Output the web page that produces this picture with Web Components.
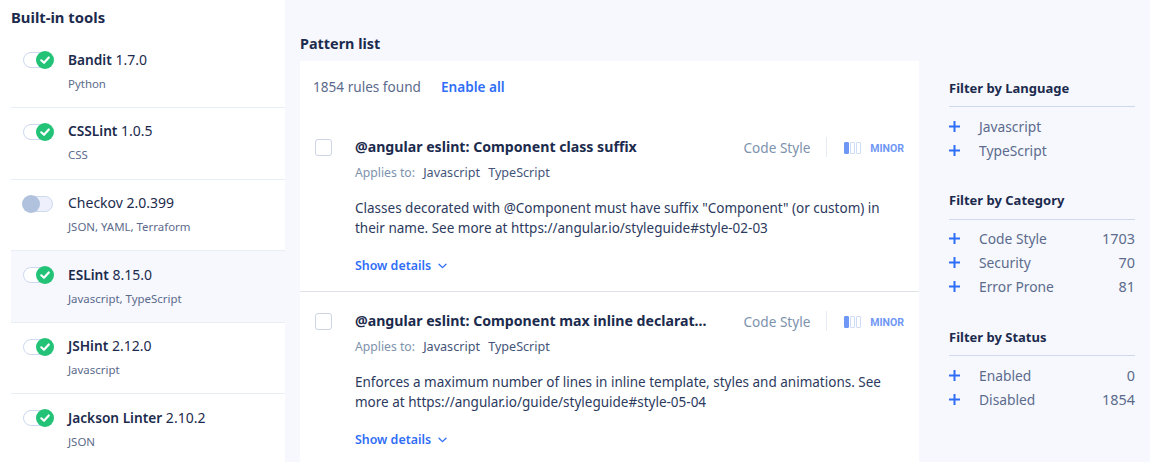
<!DOCTYPE html>
<html>
<head>
<meta charset="utf-8">
<style>
html, body { margin: 0; height: 100%; overflow: hidden; background: #fff; }
body { font-family: "Noto Sans", sans-serif; color: #1c2b4d; }
</style>
</head>
<body>
<app-shell>
    <tools-panel slot="tools">
        <tool-row name="Bandit" version="1.7.0" langs="Python" on></tool-row>
        <tool-row name="CSSLint" version="1.0.5" langs="CSS" on></tool-row>
        <tool-row name="Checkov" version="2.0.399" langs="JSON, YAML, Terraform"></tool-row>
        <tool-row name="ESLint" version="8.15.0" langs="Javascript, TypeScript" on selected></tool-row>
        <tool-row name="JSHint" version="2.12.0" langs="Javascript" on></tool-row>
        <tool-row name="Jackson Linter" version="2.10.2" langs="JSON" on></tool-row>
    </tools-panel>
    <pattern-list slot="patterns">
        <pattern-card title="@angular eslint: Component class suffix" category="Code Style">Classes decorated with @Component must have suffix "Component" (or custom) in their name. See more at https://angular.io/styleguide#style-02-03</pattern-card>
        <pattern-card title="@angular eslint: Component max inline declarat..." category="Code Style">Enforces a maximum number of lines in inline template, styles and animations. See more at https://angular.io/guide/styleguide#style-05-04</pattern-card>
    </pattern-list>
    <div slot="filters">
        <filter-group title="Filter by Language">
            <filter-item label="Javascript"></filter-item>
            <filter-item label="TypeScript"></filter-item>
        </filter-group>
        <filter-group title="Filter by Category">
            <filter-item label="Code Style" count="1703"></filter-item>
            <filter-item label="Security" count="70"></filter-item>
            <filter-item label="Error Prone" count="81"></filter-item>
        </filter-group>
        <filter-group title="Filter by Status">
            <filter-item label="Enabled" count="0"></filter-item>
            <filter-item label="Disabled" count="1854"></filter-item>
        </filter-group>
    </div>
</app-shell>

<script>
customElements.define("app-shell", class AppShell extends HTMLElement{
    constructor(){
        super()
        this.attachShadow({mode: "open"}).innerHTML = `
            <style>
            :host { display: flex; width: 1150px; height: 462px; background: #f6f8fe; overflow: hidden; }
            .tools { flex: 0 0 285px; background: #fff; }
            .patterns { flex: 0 0 619px; margin-left: 15px; }
            .filters { flex: 0 0 186px; margin-left: 30px; padding-top: 79px; }
            </style>
            <div class="tools"><slot name="tools"></slot></div>
            <div class="patterns"><slot name="patterns"></slot></div>
            <div class="filters"><slot name="filters"></slot></div>
        `
    }
})

customElements.define("tools-panel", class ToolsPanel extends HTMLElement{
    constructor(){
        super()
        this.attachShadow({mode: "open"}).innerHTML = `
            <style>
            :host { display: block; padding-left: 11px; }
            h2 { margin: 0; height: 36.4px; font-size: 14.8px; line-height: 35px; font-weight: 700; color: #1c2b4d; }
            </style>
            <h2>Built-in tools</h2>
            <slot></slot>
        `
    }
})

customElements.define("tool-row", class ToolRow extends HTMLElement{
    constructor(){
        super()
        const on = this.hasAttribute("on")
        this.attachShadow({mode: "open"}).innerHTML = `
            <style>
            :host { display: flex; box-sizing: border-box; height: 71.6px; padding: 13.5px 0 0 11px; border-bottom: 1px solid #e8eef6; }
            :host([selected]) { background: #f6f8fe; }
            .toggle { position: relative; flex: 0 0 30px; height: 16px; margin: 2.5px 15px 0 1px; box-sizing: border-box; border: 1px solid #cdd9ef; border-radius: 8px; background: ${on ? "#fff" : "#eef1fb"}; }
            .knob { position: absolute; top: -2px; width: 18px; height: 18px; border-radius: 50%; }
            .on { right: -2px; background: #22c277; }
            .off { left: -2px; background: #b0c2dd; }
            svg { display: block; width: 18px; height: 18px; }
            .name { font-size: 14px; line-height: 20px; color: #1c2b4d; white-space: nowrap; }
            b { font-weight: 600; font-size: 13.7px; }
            .langs { margin-top: 6px; font-size: 11.45px; line-height: 15px; color: #5c6b8c; white-space: nowrap; }
            </style>
            <div class="toggle">
                ${on ? `<div class="knob on"><svg viewBox="0 0 18 18" fill="none" stroke="#fff" stroke-width="2.2" stroke-linecap="round" stroke-linejoin="round"><polyline points="5.3 9.3 8 11.8 12.8 6.5"></polyline></svg></div>` : `<div class="knob off"></div>`}
            </div>
            <div>
                <div class="name">${on ? `<b>${this.getAttribute("name")}</b>` : this.getAttribute("name")} ${this.getAttribute("version")}</div>
                <div class="langs">${this.getAttribute("langs")}</div>
            </div>
        `
    }
})

customElements.define("pattern-list", class PatternList extends HTMLElement{
    constructor(){
        super()
        this.attachShadow({mode: "open"}).innerHTML = `
            <style>
            :host { display: block; }
            h2 { margin: 0; height: 61px; box-sizing: border-box; padding-top: 34px; font-size: 14.4px; line-height: 20px; font-weight: 700; color: #1c2b4d; }
            .card { background: #fff; height: 401px; }
            .top { display: flex; align-items: center; gap: 20px; height: 57px; padding: 0 0 6px 13px; box-sizing: border-box; font-size: 13.6px; color: #5c6b8c; }
            a { color: #2f6df6; font-weight: 600; text-decoration: none; }
            </style>
            <h2>Pattern list</h2>
            <div class="card">
                <div class="top"><span>1854 rules found</span><a href="#">Enable all</a></div>
                <slot></slot>
            </div>
        `
    }
})

customElements.define("pattern-card", class PatternCard extends HTMLElement{
    constructor(){
        super()
        this.attachShadow({mode: "open"}).innerHTML = `
            <style>
            :host { display: flex; box-sizing: border-box; height: 174px; padding: 20px 15px 0 15px; border-bottom: 1px solid #dfe3e8; }
            .check { flex: 0 0 17px; height: 17px; margin: 1px 23px 0 0; box-sizing: border-box; border: 1px solid #ccd5e3; border-radius: 3px; background: #fff; }
            .body { flex: 1; min-width: 0; }
            .head { display: flex; align-items: center; height: 18px; }
            .title { flex: 1; font-size: 14.15px; line-height: 18px; font-weight: 700; color: #1c2b4d; white-space: nowrap; }
            .category { font-size: 13.6px; color: #7d92ad; }
            .sep { width: 1px; height: 20px; margin: 0 17px 0 16px; background: #e6ecf4; }
            .level { display: flex; gap: 1px; margin: 2px 10px 0 0; }
            .level i { display: block; width: 5px; height: 12px; box-sizing: border-box; border: 1px solid #cfdcf7; border-radius: 1px; }
            .level i:first-child { background: #6f97f5; border-color: #6f97f5; }
            .minor { margin: 2px 0 0 -1px; font-family: Roboto, sans-serif; font-size: 10.5px; font-weight: 700; color: #6f97f5; }
            .applies { margin-top: 8px; font-size: 12.2px; line-height: 17px; color: #7d92ad; }
            .applies span { font-size: 12.6px; color: #45557a; margin-left: 5px; }
            .desc { margin-top: 17px; font-size: 13.5px; line-height: 20px; color: #2c3a5e; }
            .more { display: flex; align-items: center; gap: 7px; margin-top: 19px; font-size: 12.4px; line-height: 17px; font-weight: 600; color: #2f6df6; }
            svg { width: 9px; height: 6px; }
            </style>
            <div class="check"></div>
            <div class="body">
                <div class="head">
                    <div class="title">${this.getAttribute("title")}</div>
                    <div class="category">${this.getAttribute("category")}</div>
                    <div class="sep"></div>
                    <div class="level"><i></i><i></i><i></i></div>
                    <div class="minor">MINOR</div>
                </div>
                <div class="applies">Applies to: <span>Javascript</span> <span>TypeScript</span></div>
                <div class="desc"><slot></slot></div>
                <div class="more">Show details <svg viewBox="0 0 9 6" fill="none" stroke="#2f6df6" stroke-width="1.3" stroke-linecap="round" stroke-linejoin="round"><polyline points="1 1.2 4.5 4.6 8 1.2"></polyline></svg></div>
            </div>
        `
    }
})

customElements.define("filter-group", class FilterGroup extends HTMLElement{
    constructor(){
        super()
        this.attachShadow({mode: "open"}).innerHTML = `
            <style>
            :host { display: block; margin-bottom: 29.3px; }
            h3 { margin: 0 0 6.8px; padding-bottom: 9.4px; font-size: 13px; line-height: 18px; font-weight: 700; color: #1c2b4d; border-bottom: 1px solid #cfd9ee; }
            </style>
            <h3>${this.getAttribute("title")}</h3>
            <slot></slot>
        `
    }
})

customElements.define("filter-item", class FilterItem extends HTMLElement{
    constructor(){
        super()
        this.attachShadow({mode: "open"}).innerHTML = `
            <style>
            :host { display: flex; align-items: center; height: 24px; font-size: 13.8px; color: #5c6b8c; }
            svg { flex: 0 0 11px; width: 11px; height: 11px; margin-right: 19px; }
            .label { flex: 1; }
            .count { font-size: 14.4px; }
            </style>
            <svg viewBox="0 0 11 11" stroke="#2f6df6" stroke-width="2"><line x1="0" y1="5.5" x2="11" y2="5.5"></line><line x1="5.5" y1="0" x2="5.5" y2="11"></line></svg>
            <span class="label">${this.getAttribute("label")}</span>
            <span class="count">${this.getAttribute("count") || ""}</span>
        `
    }
})
</script>
</body>
</html>
